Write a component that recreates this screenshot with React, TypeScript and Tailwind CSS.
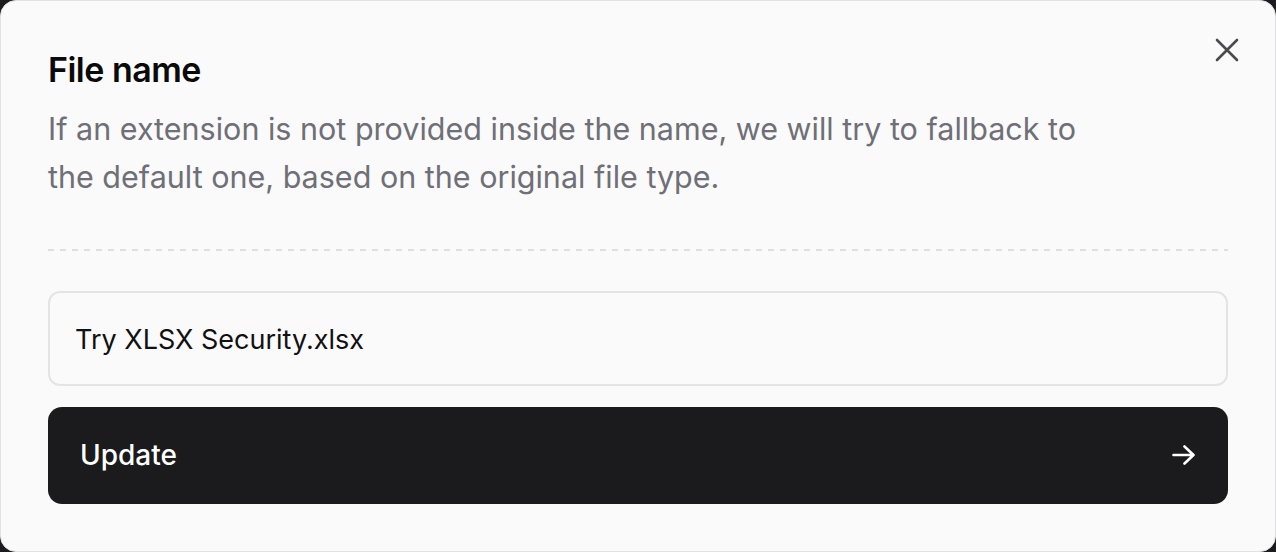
import { useState } from "react";

export default function App() {
  const [name, setName] = useState("Try XLSX Security.xlsx");
  return (
    <div className="h-[552px] w-[1276px] bg-[#1c1c1e] font-['Inter','Liberation_Sans',sans-serif]">
      <div className="relative flex h-full flex-col rounded-[16px] border border-[#e2e2e4] bg-[#fafafa] px-[47px] pt-[47px]">
        <button className="absolute right-[35px] top-[36px] flex h-[26px] w-[26px] items-center justify-center text-[#4b4b4f]">
          <svg width="24" height="24" viewBox="0 0 24 24" fill="none" stroke="currentColor" strokeWidth="2.6" strokeLinecap="round">
            <path d="M2 2L22 22M22 2L2 22" />
          </svg>
        </button>

        <h2 className="text-[34px] font-semibold leading-[44px] tracking-[-0.015em] text-[#0a0a0a]">File name</h2>
        <p className="mt-[13px] max-w-[1080px] text-[30.5px] leading-[48px] text-[#6f6f77]">
          If an extension is not provided inside the name, we will try to fallback to the default one, based on the
          original file type.
        </p>

        <div className="mt-[48px] h-[1.5px] bg-[linear-gradient(to_right,#dfdfe1_6px,transparent_6px)] bg-[length:12px_1.5px]" />

        <input
          value={name}
          onChange={(e) => setName(e.target.value)}
          className="mt-[40px] h-[95px] w-full rounded-[12px] border-2 border-[#e4e4e6] bg-[#fafafa] px-[25px] pt-[2px] text-[27px] text-[#111113] outline-none"
        />

        <button className="mt-[21px] flex h-[97px] w-full items-center justify-between rounded-[14px] bg-[#1b1b1d] pl-[32px] pr-[33px] text-[28px] font-medium text-white">
          <span>Update</span>
          <svg width="23" height="20" viewBox="0 0 23 20" fill="none" stroke="currentColor" strokeWidth="2.6" strokeLinecap="round" strokeLinejoin="round">
            <path d="M1.5 10H21.5M12.5 1.5L21.5 10L12.5 18.5" />
          </svg>
        </button>
      </div>
    </div>
  );
}
